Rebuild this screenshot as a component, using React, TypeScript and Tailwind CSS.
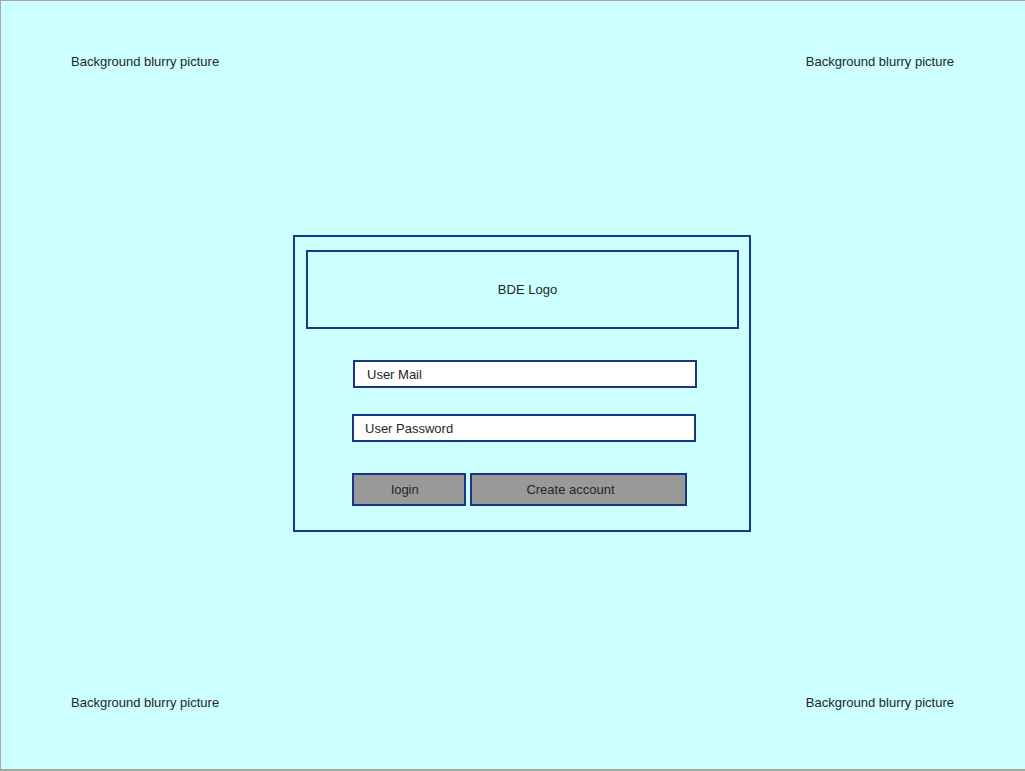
export default function App() {
  return (
    <div
      className="w-[1025px] h-[771px] flex flex-col border-l border-t border-b-2 border-[#a6a6a6] bg-[#ccffff] text-[13px] leading-[15px] text-[#262626]"
      style={{ fontFamily: '"Liberation Sans", Arial, sans-serif' }}
    >
      {/* Top background labels */}
      <div className="mt-[53px] h-[15px] flex justify-between pl-[70px] pr-[71px]">
        <span>Background blurry picture</span>
        <span>Background blurry picture</span>
      </div>

      {/* Login card */}
      <div className="mt-[166px] ml-[292px] w-[458px] h-[297px] border-2 border-[#1b3486] flex flex-col">
        <div className="mt-[13px] ml-[11px] w-[433px] h-[79px] border-2 border-[#1b3486] flex items-center justify-center pl-[10px]">
          BDE Logo
        </div>

        <div className="mt-[31px] ml-[58px] w-[344px] h-[28px] border-2 border-[#1b3486] bg-white flex items-center pl-[12px]">
          User Mail
        </div>

        <div className="mt-[26px] ml-[57px] w-[344px] h-[28px] border-2 border-[#1b3486] bg-white flex items-center pl-[11px]">
          User Password
        </div>

        <div className="mt-[31px] ml-[57px] flex gap-[4px]">
          <div className="w-[114px] h-[33px] border-2 border-[#1b3486] bg-[#999999] flex items-center justify-center pr-[8px]">
            login
          </div>
          <div className="w-[217px] h-[33px] border-2 border-[#1b3486] bg-[#999999] flex items-center justify-center pr-[16px]">
            Create account
          </div>
        </div>
      </div>

      {/* Bottom background labels */}
      <div className="mt-[163px] h-[15px] flex justify-between pl-[70px] pr-[71px]">
        <span>Background blurry picture</span>
        <span>Background blurry picture</span>
      </div>
    </div>
  );
}
